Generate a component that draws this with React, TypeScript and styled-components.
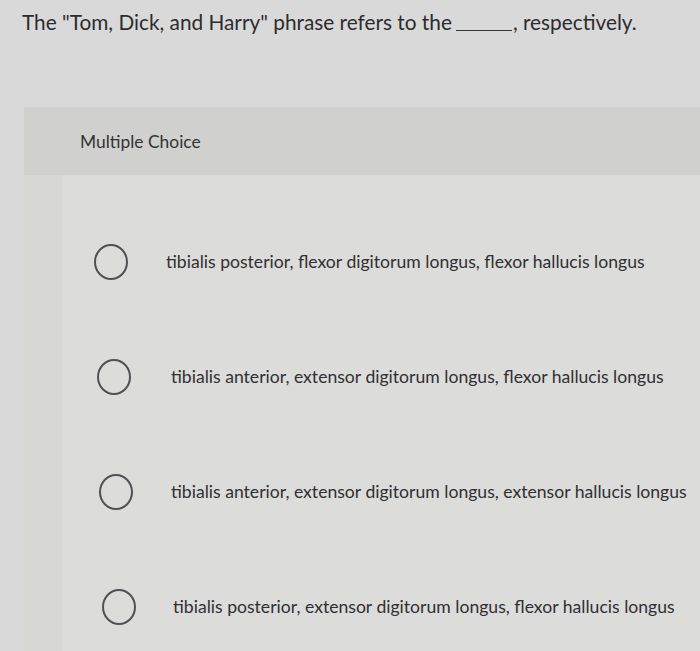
import React from "react";
import styled, { createGlobalStyle } from "styled-components";

const Global = createGlobalStyle`
  html, body { margin: 0; padding: 0; }
  body {
    background: #dad9d9;
    font-family: Lato, "Open Sans", "Liberation Sans", sans-serif;
    color: #2f2f31;
    width: 700px;
    height: 651px;
    overflow: hidden;
  }
`;

const Page = styled.div`
  display: flex;
  flex-direction: column;
  height: 651px;
  overflow: hidden;
`;

const Question = styled.div`
  flex: none;
  padding: 8px 0 0 22px;
  height: 107px;
  box-sizing: border-box;
  font-size: 20.8px;
  line-height: 28px;
  color: #2c2c2e;
`;

const Blank = styled.span`
  display: inline-block;
  width: 56px;
  height: 0;
  border-bottom: 1.5px solid #333;
  margin: 0 1px 0 4px;
  vertical-align: -1px;
`;

const Card = styled.section`
  margin-left: 24px;
  flex: 1;
  min-height: 0;
  background: #d7d7d6;
  display: flex;
  flex-direction: column;
`;

const Header = styled.div`
  flex: none;
  height: 68px;
  display: flex;
  align-items: center;
  padding-left: 56px;
  font-size: 17.4px;
  color: #333;
  background: #d0d0cf;
`;

const Options = styled.div`
  margin-left: 38px;
  padding-top: 29px;
  flex: 1;
  background: #dcdcdb;
  display: flex;
  flex-direction: column;
`;

const Row = styled.label<{ $shift: number; $gap: number }>`
  flex: none;
  height: 115px;
  display: flex;
  align-items: center;
  padding-left: ${(p) => 32 + p.$shift}px;
  gap: ${(p) => p.$gap}px;
  font-size: 17.6px;
  color: #303032;
`;

const Radio = styled.span`
  width: 30px;
  height: 32px;
  border: 2.5px solid #505055;
  border-radius: 50%;
  flex: none;
`;

const options = [
  { text: "tibialis posterior, flexor digitorum longus, flexor hallucis longus", shift: 0, gap: 38 },
  { text: "tibialis anterior, extensor digitorum longus, flexor hallucis longus", shift: 3, gap: 40 },
  { text: "tibialis anterior, extensor digitorum longus, extensor hallucis longus", shift: 5, gap: 38 },
  { text: "tibialis posterior, extensor digitorum longus, flexor hallucis longus", shift: 8, gap: 37 },
];

export default function App() {
  return (
    <>
      <Global />
      <Page>
        <Question>
          The "Tom, Dick, and Harry" phrase refers to the<Blank />, respectively.
        </Question>
        <Card>
          <Header>Multiple Choice</Header>
          <Options>
            {options.map((o) => (
              <Row key={o.text} $shift={o.shift} $gap={o.gap}>
                <Radio />
                <span>{o.text}</span>
              </Row>
            ))}
          </Options>
        </Card>
      </Page>
    </>
  );
}
